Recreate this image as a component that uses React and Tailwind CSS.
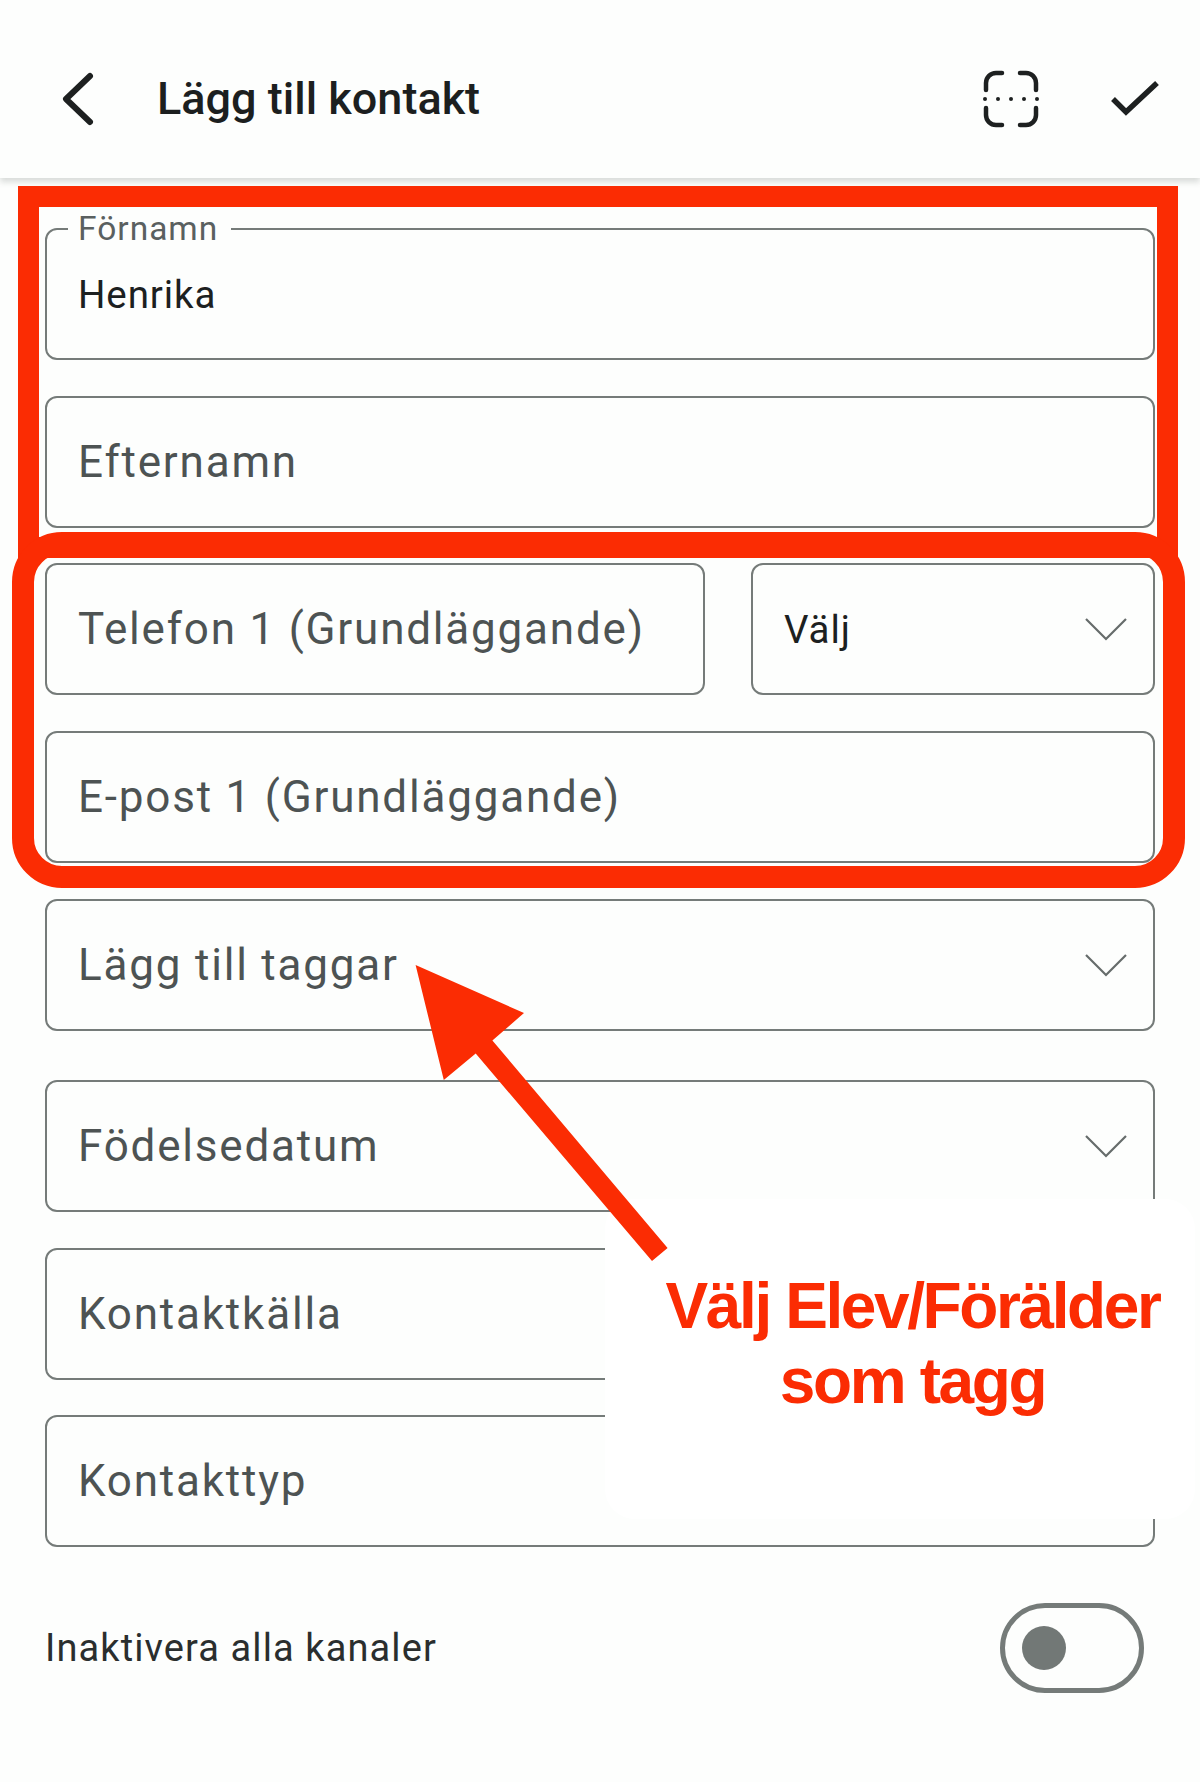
const RED = "#fb2c03";

function Chevron() {
  return (
    <svg width="42" height="24" viewBox="0 0 42 24" fill="none" className="shrink-0">
      <path d="M1 2 L21 22 L41 2" stroke="#666c6b" strokeWidth="2.2" />
    </svg>
  );
}

function Field({ label, value, floating, select, dark, className = "" }) {
  return (
    <div className={`relative flex h-[132px] items-center justify-between rounded-[12px] border-[2.5px] border-[#757b79] pl-[31px] pr-[26px] ${className}`}>
      {floating && (
        <span className="absolute left-[21px] top-[-20px] bg-[#fdfefd] px-[10px] pr-[13px] text-[33.5px] leading-[38px] tracking-[1px] text-[#5a6060]">
          {floating}
        </span>
      )}
      <span className={dark ? "pt-[2px] text-[38.5px] tracking-[0.9px] text-[#1c2020]" : "text-[44px] tracking-[1.8px] text-[#4d5353]"}>
        {value || label}
      </span>
      {select && <Chevron />}
    </div>
  );
}

export default function App() {
  return (
    <div className="relative min-h-screen overflow-hidden bg-[#fdfefd] font-['Roboto',sans-serif]">
      {/* header */}
      <div className="relative flex h-[178px] items-center bg-[#fdfefd] pl-[59px] pr-[40px] pt-[20px] shadow-[0_4px_6px_rgba(70,80,75,0.2)]">
        <svg width="36" height="56" viewBox="0 0 36 56" fill="none">
          <path d="M31 5 L7 28 L31 51" stroke="#1d2020" strokeWidth="6" strokeLinecap="round" strokeLinejoin="round" />
        </svg>
        <h1 className="ml-[62px] flex-1 text-[45px] font-medium text-[#1c1f1f]">Lägg till kontakt</h1>
        <svg width="58" height="58" viewBox="0 0 58 58" fill="none" className="mr-[70px]">
          <path
            d="M4 20 V13 A10 10 0 0 1 14 3 H20 M38 3 H44 A10 10 0 0 1 54 13 V20 M4 38 V45 A10 10 0 0 0 14 55 H20 M38 55 H44 A10 10 0 0 0 54 45 V38"
            stroke="#1d2020"
            strokeWidth="4.5"
            strokeLinecap="round"
          />
          {[3, 16, 29, 42, 55].map((x) => (
            <circle key={x} cx={x} cy="29" r="2" fill="#1d2020" />
          ))}
        </svg>
        <svg width="50" height="40" viewBox="0 0 50 40" fill="none">
          <path d="M3 20 L16 33 L47 4" stroke="#1d2020" strokeWidth="5.5" />
        </svg>
      </div>

      {/* form */}
      <div className="flex flex-col px-[45px] pt-[50px]">
        <Field floating="Förnamn" value="Henrika" dark />
        <Field label="Efternamn" className="mt-[36px]" />
        <div className="mt-[35px] flex gap-[46px]">
          <Field label="Telefon 1 (Grundläggande)" className="w-[660px]" />
          <Field value="Välj" dark select className="flex-1" />
        </div>
        <Field label="E-post 1 (Grundläggande)" className="mt-[36px]" />
        <Field label="Lägg till taggar" select className="mt-[36px]" />
        <Field label="Födelsedatum" select className="mt-[49px]" />
        <Field label="Kontaktkälla" className="mt-[36px]" />
        <Field label="Kontakttyp" className="mt-[35px]" />
        <div className="mt-[56px] flex items-center justify-between pr-[11px]">
          <span className="text-[38px] tracking-[1.1px] text-[#2a2e2e]">Inaktivera alla kanaler</span>
          <div className="flex h-[90px] w-[144px] items-center rounded-full border-[5px] border-[#757b79] pl-[17px]">
            <div className="h-[44px] w-[44px] rounded-full bg-[#727876]" />
          </div>
        </div>
      </div>

      {/* red annotations on top of the screenshot */}
      <div className="absolute left-[18px] top-[186px] h-[372px] w-[1160px] border-[21px] border-[#fb2c03]" />
      <div className="absolute left-[12px] top-[532px] h-[356px] w-[1173px] rounded-[50px] border-[22px] border-[#fb2c03] bg-transparent" />
      <div className="absolute left-[605px] top-[1199px] flex h-[320px] w-[590px] flex-col items-center rounded-[30px] bg-white pt-[70px]">
        <p className="ml-[25px] text-center font-['Liberation_Sans',sans-serif] text-[64px] font-bold leading-[75px] tracking-[-2.4px] text-[#fb2c03]">
          Välj Elev/Förälder
          <br />
          som tagg
        </p>
      </div>
      <svg className="absolute left-[400px] top-[950px]" width="280" height="320" viewBox="400 950 280 320">
        <polygon
          points="415.6,965 524,1013 492.4,1040.5 667.6,1248 652,1261 475.7,1053.6 443.8,1080"
          fill={RED}
        />
      </svg>
    </div>
  );
}
